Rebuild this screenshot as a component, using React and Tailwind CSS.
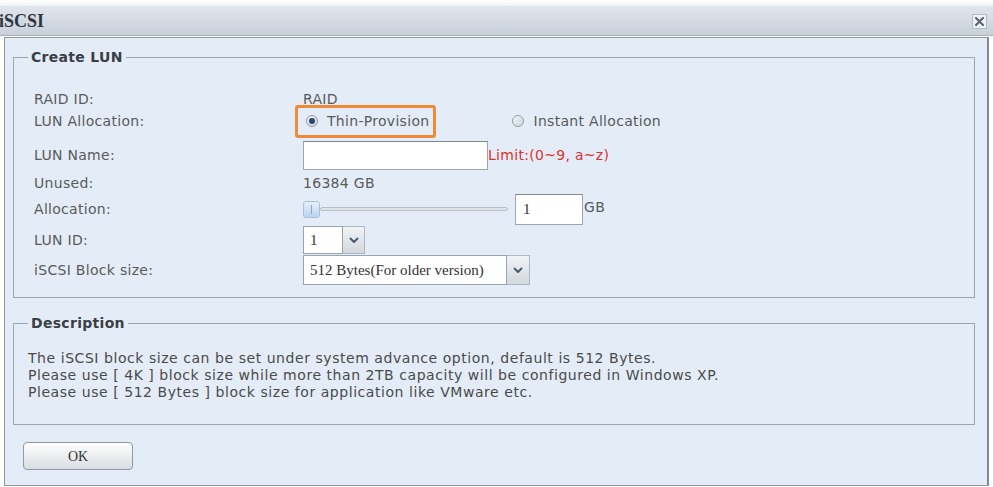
import React from 'react'

/* iSCSI – Create LUN dialog */

function Radio({ checked }) {
  return (
    <span className="relative inline-flex w-[12px] h-[12px] shrink-0 items-center justify-center rounded-full border border-[#8f9aa7] bg-gradient-to-br from-[#f4f6f8] to-[#cfd5dc]">
      {checked && <span className="w-[6px] h-[6px] rounded-full bg-[#27476f]" />}
    </span>
  )
}

function Chevron() {
  return (
    <svg width="10" height="7" viewBox="0 0 10 7" aria-hidden>
      <path d="M1.5 1.5 L5 5 L8.5 1.5" fill="none" stroke="#4a5c73" strokeWidth="2" strokeLinecap="round" strokeLinejoin="round" />
    </svg>
  )
}

function Select({ value, width, height, arrow }) {
  return (
    <div className="flex items-stretch" style={{ height }}>
      <div className="flex items-center bg-white border border-[#9aa4af] pl-[6px] font-['Liberation_Serif',serif] text-[15px] tracking-normal text-[#333]" style={{ width }}>
        {value}
      </div>
      <div className="flex items-center justify-center border border-l-0 border-[#aeb6bf] bg-gradient-to-b from-[#f1f3f5] to-[#d3d8de]" style={{ width: arrow }}>
        <Chevron />
      </div>
    </div>
  )
}

function Row({ label, className, children }) {
  return (
    <div className={`flex items-center ${className}`}>
      <div className="w-[269px] shrink-0">{label}</div>
      <div className="flex items-center">{children}</div>
    </div>
  )
}

export default function App() {
  return (
    <div className="w-[993px] h-[487px] overflow-hidden bg-white font-['DejaVu_Sans',sans-serif] text-[14px] tracking-[0.3px] text-[#5a5a5a]">
      <div className="h-[6px] bg-gradient-to-b from-white to-[#eef1f4]" />

      {/* title bar */}
      <div className="h-[30px] flex items-center justify-between border-b border-[#aab3bd] bg-gradient-to-b from-[#e1e6ec] to-[#c8d0da]">
        <span className="ml-[-1px] font-['Liberation_Serif',serif] font-bold text-[18px] tracking-normal text-[#2f3640] leading-none">iSCSI</span>
        <span className="mr-[6px] mt-[2px] flex w-[15px] h-[15px] items-center justify-center border border-[#b3bcc6] bg-[#eef1f5]">
          <svg width="9" height="9" viewBox="0 0 9 9" aria-hidden>
            <path d="M1 1 L8 8 M8 1 L1 8" stroke="#56606c" strokeWidth="2" strokeLinecap="round" />
          </svg>
        </span>
      </div>

      {/* dialog body */}
      <div className="ml-[4px] mt-[1px] w-[985px] h-[449px] border border-[#8e99a5] border-r-2 border-r-[#7f8a96] bg-[#e4edf7] pl-[8px] pr-[12px] pt-[10px]">
        <fieldset className="border border-[#9ba6b2]">
          <legend className="ml-[14px] px-[3px] font-bold text-[14px] leading-[18px] text-[#3a3f45]">Create LUN</legend>
          <div className="pl-[20px] pt-[22px] pb-[12px] leading-[18px]">
            <Row label="RAID ID:" className="h-[22px]">RAID</Row>
            <Row label="LUN Allocation:" className="h-[22px]">
              <label className="ml-[-8px] flex h-[33px] items-center gap-[9px] rounded-[3px] border-[3px] border-[#ef8b36] pl-[8px] pr-[4px]">
                <Radio checked />
                <span>Thin-Provision</span>
              </label>
              <label className="ml-[76px] flex items-center gap-[9px]">
                <Radio />
                <span>Instant Allocation</span>
              </label>
            </Row>
            <Row label="LUN Name:" className="mt-[8px] h-[30px]">
              <div className="w-[185px] h-[29px] bg-white border border-[#9ca6b1] border-t-[#7d8894]" />
              <span className="text-[#e0302c]">Limit:(0~9, a~z)</span>
            </Row>
            <Row label="Unused:" className="mt-[3px] h-[20px]">16384 GB</Row>
            <Row label="Allocation:" className="h-[32px]">
              <div className="relative flex w-[205px] items-center">
                <div className="w-[17px] h-[17px] shrink-0 rounded-[3px] border border-[#a7bfdc] bg-gradient-to-b from-[#e6f0fb] to-[#bcd3ee] flex items-center justify-center">
                  <span className="w-[1px] h-[9px] bg-[#8aa6c8]" />
                </div>
                <div className="h-[4px] flex-1 rounded-full border border-[#b9bfc6] bg-[#dfe3e8]" />
              </div>
              <div className="ml-[7px] flex w-[68px] h-[31px] items-center bg-white border border-[#9ca6b1] border-t-[#7d8894] pl-[7px] font-['Liberation_Serif',serif] text-[15px] tracking-normal text-[#333]">1</div>
              <span className="mb-[4px] ml-[1px] text-[#5a5a5a]">GB</span>
            </Row>
            <Row label="LUN ID:" className="mt-[1px] h-[28px]">
              <Select value="1" width={40} height={28} arrow={22} />
            </Row>
            <Row label="iSCSI Block size:" className="mt-[1px] h-[30px]">
              <Select value="512 Bytes(For older version)" width={204} height={30} arrow={23} />
            </Row>
          </div>
        </fieldset>

        <fieldset className="mt-[16px] border border-[#9ba6b2]">
          <legend className="ml-[14px] px-[3px] font-bold text-[14px] leading-[18px] text-[#3a3f45]">Description</legend>
          <div className="pl-[14px] pt-[18px] pb-[23px] leading-[17px] tracking-[0.55px] text-[#4a4a4a]">
            <p>The iSCSI block size can be set under system advance option, default is 512 Bytes.</p>
            <p>Please use [ 4K ] block size while more than 2TB capacity will be configured in Windows XP.</p>
            <p>Please use [ 512 Bytes ] block size for application like VMware etc.</p>
          </div>
        </fieldset>

        <button className="mt-[17px] ml-[10px] w-[110px] h-[28px] rounded-[4px] border border-[#8d9aa8] bg-gradient-to-b from-white to-[#d9dde2] font-['Liberation_Serif',serif] text-[14px] tracking-normal text-[#333]">
          OK
        </button>
      </div>
    </div>
  )
}
